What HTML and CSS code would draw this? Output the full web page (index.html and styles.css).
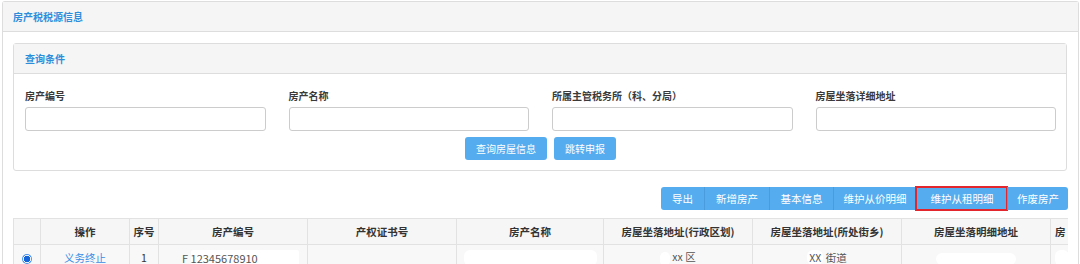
FILE: index.html
```html
<!DOCTYPE html>
<html lang="zh-CN">
<head>
    <meta charset="UTF-8">
    <title>房产税税源信息</title>
    <link rel="stylesheet" href="styles.css">
</head>
<body>
    <div class="panel">
        <div class="panel-heading">房产税税源信息</div>
        <div class="panel-body">

            <!-- 查询条件 -->
            <div class="query-panel">
                <div class="query-heading">查询条件</div>
                <div class="query-body">
                    <div class="fields">
                        <div class="field">
                            <label>房产编号</label>
                            <input type="text">
                        </div>
                        <div class="field">
                            <label>房产名称</label>
                            <input type="text">
                        </div>
                        <div class="field">
                            <label>所属主管税务所（科、分局）</label>
                            <input type="text">
                        </div>
                        <div class="field">
                            <label>房屋坐落详细地址</label>
                            <input type="text">
                        </div>
                    </div>
                    <div class="query-actions">
                        <button class="btn">查询房屋信息</button>
                        <button class="btn">跳转申报</button>
                    </div>
                </div>
            </div>

            <!-- 工具栏 -->
            <div class="toolbar">
                <div class="btn-group">
                    <button class="tb-btn w-export">导出</button>
                    <button class="tb-btn w-add">新增房产</button>
                    <button class="tb-btn w-base">基本信息</button>
                    <button class="tb-btn w-price">维护从价明细</button>
                    <button class="tb-btn w-rent active">维护从租明细</button>
                    <button class="tb-btn w-void">作废房产</button>
                </div>
            </div>

            <!-- 房产列表 -->
            <div class="table-wrap">
                <table class="grid">
                    <colgroup>
                        <col class="c-radio">
                        <col class="c-op">
                        <col class="c-no">
                        <col class="c-std">
                        <col class="c-std">
                        <col class="c-name">
                        <col class="c-std">
                        <col class="c-std">
                        <col class="c-std">
                        <col class="c-std">
                    </colgroup>
                    <thead>
                        <tr>
                            <th></th>
                            <th>操作</th>
                            <th>序号</th>
                            <th>房产编号</th>
                            <th>产权证书号</th>
                            <th>房产名称</th>
                            <th>房屋坐落地址(行政区划)</th>
                            <th>房屋坐落地址(所处街乡)</th>
                            <th>房屋坐落明细地址</th>
                            <th class="left">房</th>
                        </tr>
                    </thead>
                    <tbody>
                        <tr>
                            <td><span class="radio"></span></td>
                            <td><a class="link">义务终止</a></td>
                            <td>1</td>
                            <td class="left code">F <span class="mask num">12345678910</span></td>
                            <td></td>
                            <td><span class="mask blob-name"></span></td>
                            <td class="plain"><span class="mask blob-short"></span>xx 区</td>
                            <td class="plain"><span class="mask xx">XX</span> 街道</td>
                            <td><span class="mask blob-addr"></span></td>
                            <td class="left"><span class="mask blob-end"></span></td>
                        </tr>
                    </tbody>
                </table>
            </div>

        </div>
    </div>
</body>
</html>
```

FILE: styles.css
```css
/* Página */
body {
    margin: 0;
    padding: 1px 1px 0 2px;
    font-family: "Noto Sans CJK SC", "Noto Sans", sans-serif;
    font-size: 10px;
    color: #333;
    background-color: #fff;
}

/* Painel externo */
.panel {
    border: 1px solid #ddd;
    border-bottom: none;
    border-radius: 3px 3px 0 0;
    height: 300px;
}

.panel-heading {
    height: 29px;
    line-height: 29px;
    padding-left: 10px;
    background-color: #f5f5f5;
    border-bottom: 1px solid #ddd;
    color: #2e8ddb;
    font-weight: bold;
}

.panel-body {
    padding: 11px 10px 0 10px;
}

/* Painel de consulta */
.query-panel {
    border: 1px solid #ddd;
    border-radius: 3px;
    margin-right: 1px;
}

.query-heading {
    height: 29px;
    line-height: 29px;
    padding-left: 11px;
    background-color: #f5f5f5;
    border-bottom: 1px solid #ddd;
    color: #2e8ddb;
    font-weight: bold;
}

.query-body {
    padding: 14px 10px 10px 11px;
}

.fields {
    display: grid;
    grid-template-columns: repeat(4, 1fr);
    column-gap: 23px;
}

.field label {
    display: block;
    line-height: 16px;
    margin-bottom: 3px;
    font-weight: bold;
    color: #3a3a3a;
}

.field input {
    box-sizing: border-box;
    width: 100%;
    height: 24px;
    border: 1px solid #ccc;
    border-radius: 3px;
    background: #fff;
}

.query-actions {
    display: flex;
    justify-content: center;
    gap: 7px;
    margin-top: 6px;
}

.btn {
    height: 23px;
    padding: 0 11px;
    border: none;
    border-radius: 3px;
    background-color: #55acee;
    color: #fff;
    font-family: inherit;
    font-size: 10px;
}

/* Barra de ferramentas */
.toolbar {
    display: flex;
    justify-content: flex-end;
    margin-top: 16px;
}

.btn-group {
    display: flex;
    border-radius: 3px;
    background-color: #55acee;
}

.tb-btn {
    height: 23px;
    padding: 0;
    border: none;
    border-left: 1px solid #4a9ddd;
    background: transparent;
    color: #fff;
    font-family: inherit;
    font-size: 10.5px;
}

.tb-btn:first-child {
    border-left: none;
}

.tb-btn.active {
    outline: 2px solid #e3262d;
    outline-offset: -1px;
}

.w-export { width: 43px; }
.w-add { width: 65px; }
.w-base { width: 64px; }
.w-price { width: 83px; }
.w-rent { width: 91px; }
.w-void { width: 61px; }

/* Tabela */
.table-wrap {
    margin-top: 8px;
    overflow: hidden;
}

.grid {
    table-layout: fixed;
    border-collapse: collapse;
    width: 1186px;
    font-size: 10.5px;
}

.c-radio { width: 27px; }
.c-op { width: 89px; }
.c-no { width: 29px; }
.c-std { width: 149px; }
.c-name { width: 147px; }

.grid th,
.grid td {
    height: 25px;
    padding: 0;
    border: 1px solid #e2e2e2;
    text-align: center;
    white-space: nowrap;
    overflow: hidden;
}

.grid th {
    background-color: #f6f6f6;
    font-weight: bold;
    color: #333;
}

.grid td {
    background-color: #f8f8f8;
    color: #333;
}

.grid .left {
    text-align: left;
    padding-left: 4px;
}

.grid td.code {
    padding-left: 23px;
    font-size: 11px;
    color: #555;
}

.grid td.plain {
    color: #555;
}

.link {
    color: #3a8ee6;
}

.radio {
    display: inline-block;
    width: 10px;
    height: 10px;
    border-radius: 50%;
    vertical-align: middle;
    background: radial-gradient(circle, #1565d8 0 3px, #e8f1fd 3px 4px, #4b93ef 4px);
}

/* Áreas ocultadas */
.mask {
    display: inline-block;
    background-color: #fff;
    border-radius: 6px;
    vertical-align: middle;
}

.num {
    width: 108px;
    line-height: 16px;
    vertical-align: baseline;
    border-radius: 2px;
}

.xx {
    padding: 0 2px;
    vertical-align: baseline;
}

.blob-name {
    width: 133px;
    height: 16px;
}

.blob-short {
    width: 10px;
    height: 14px;
    margin-right: 2px;
}

.blob-addr {
    width: 80px;
    height: 12px;
}

.blob-end {
    width: 14px;
    height: 16px;
}
```
